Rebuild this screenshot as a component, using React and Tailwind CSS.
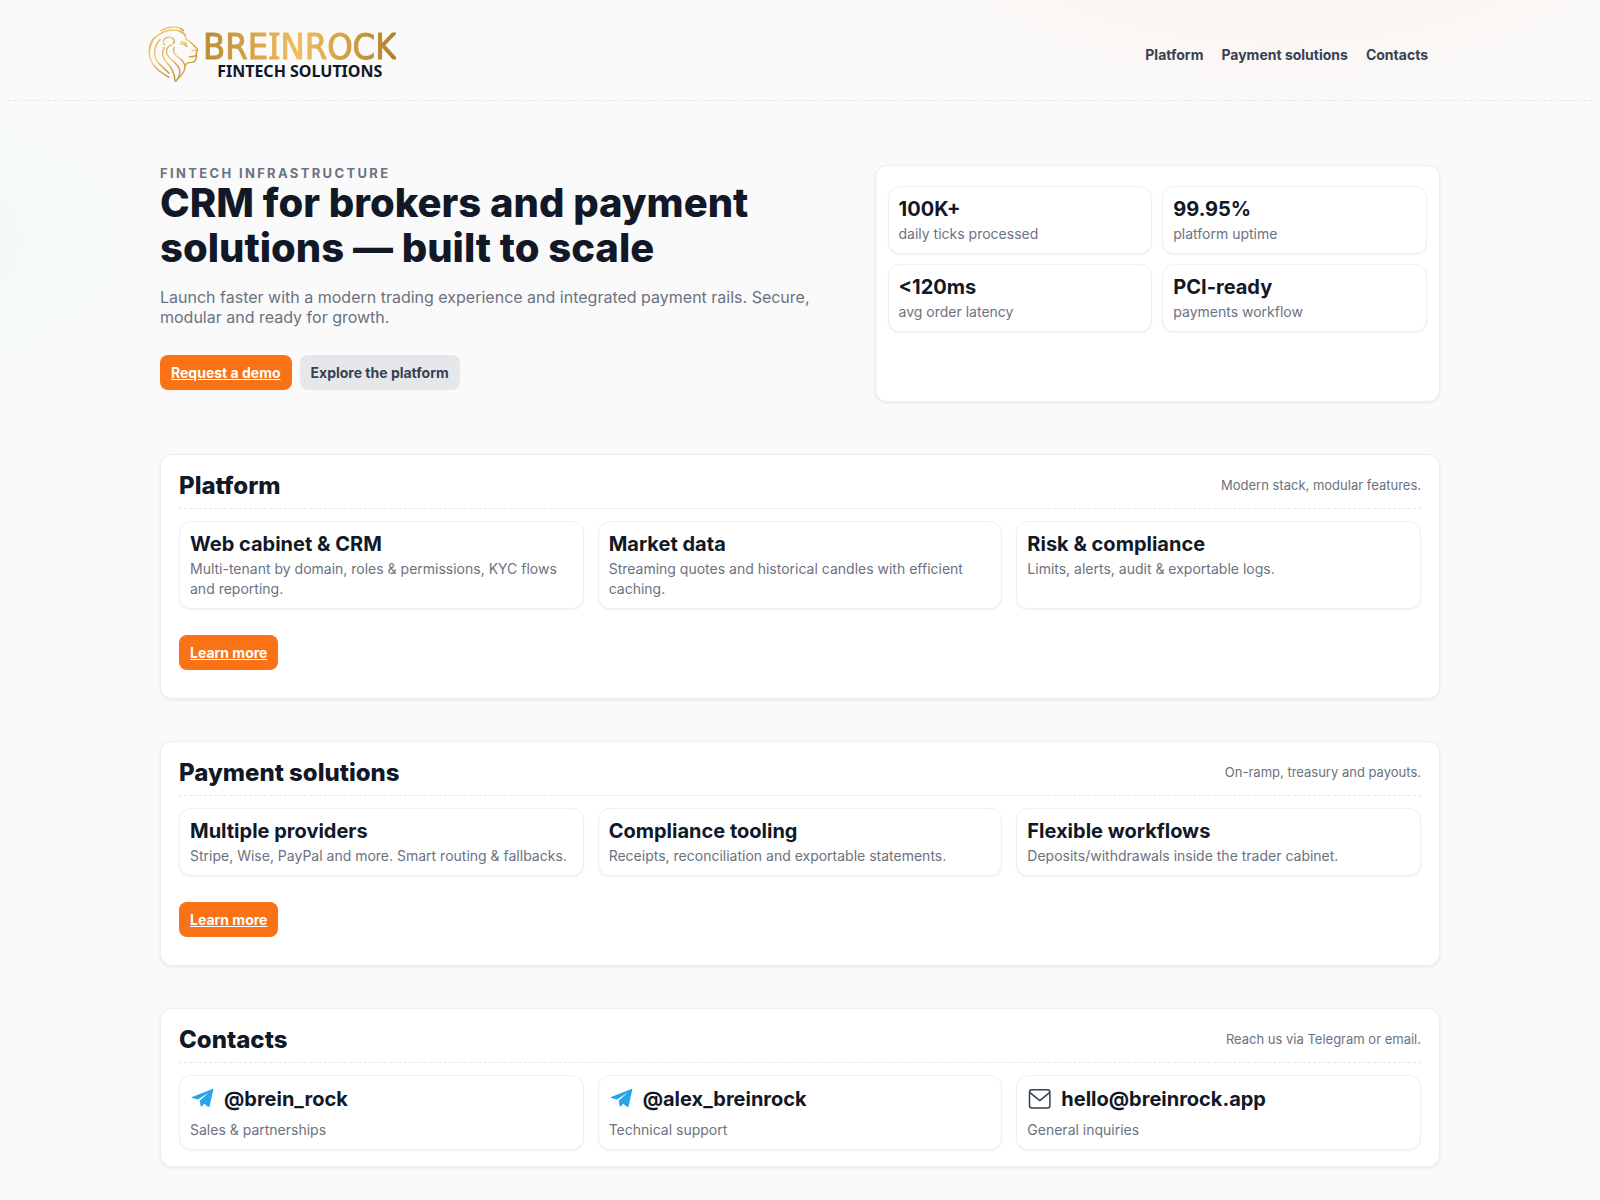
import React from "react";

const stats = [
  { value: "100K+", label: "daily ticks processed" },
  { value: "99.95%", label: "platform uptime" },
  { value: "<120ms", label: "avg order latency" },
  { value: "PCI-ready", label: "payments workflow" },
];

const platform = [
  {
    title: "Web cabinet & CRM",
    text: "Multi-tenant by domain, roles & permissions, KYC flows and reporting.",
  },
  {
    title: "Market data",
    text: "Streaming quotes and historical candles with efficient caching.",
  },
  {
    title: "Risk & compliance",
    text: "Limits, alerts, audit & exportable logs.",
  },
];

const payments = [
  {
    title: "Multiple providers",
    text: "Stripe, Wise, PayPal and more. Smart routing & fallbacks.",
  },
  {
    title: "Compliance tooling",
    text: "Receipts, reconciliation and exportable statements.",
  },
  {
    title: "Flexible workflows",
    text: "Deposits/withdrawals inside the trader cabinet.",
  },
];

const contacts = [
  { icon: "telegram", title: "@brein_rock", text: "Sales & partnerships" },
  { icon: "telegram", title: "@alex_breinrock", text: "Technical support" },
  { icon: "mail", title: "hello@breinrock.app", text: "General inquiries" },
];

const Lion = () => (
  <svg viewBox="0 0 174 192" className="h-16 w-[58px]" fill="none" aria-hidden="true">
    <defs>
      <linearGradient id="gold" x1="0" y1="0" x2="1" y2="1">
        <stop offset="0" stopColor="#e0ab48" />
        <stop offset="0.35" stopColor="#f3cd78" />
        <stop offset="0.6" stopColor="#d9a13c" />
        <stop offset="1" stopColor="#c4902f" />
      </linearGradient>
    </defs>
    <g stroke="url(#gold)" strokeWidth="4" strokeLinecap="round" strokeLinejoin="round">
      {/* mane, outside in */}
      <path d="M48 26C66 14 98 10 116 26" />
      <path d="M14 84C18 48 48 26 82 24c18 0 34 4 40 18" />
      <path d="M30 46C14 60 8 86 16 110c8 26 30 40 56 56" />
      <path d="M46 52C30 68 24 94 34 114c8 14 26 26 38 40" />
      <path d="M58 76C48 92 52 106 64 120c12 14 24 26 26 56" />
      <path d="M82 68c-16 4-22 18-14 32 10 16 32 24 36 44 2 12-2 24-12 34" />
      <path d="M88 76c-6 10 0 22 12 30 14 10 22 18 20 32-2 12-14 26-28 40" />
      {/* ear */}
      <path d="M58 68C50 54 60 44 76 46c10 1 14 8 10 18" />
      {/* face */}
      <path d="M104 28c12 4 18 12 20 24l12 8 18 18c5 3 5 8 1 12l-2 8c3 3 3 6 0 8 2 8-4 14-14 15-10 0-18 5-20 14" />
      <path d="M106 66c8-1 14 1 20 7M110 60l14 4" />
      <path d="M141 88c4-4 8-5 14-3M132 104c8 1 14 0 20-3" />
    </g>
  </svg>
);

const Logo = () => (
  <a href="#top" className="flex items-center" aria-label="Breinrock Fintech Solutions">
    <Lion />
    <span className="flex flex-col items-center pb-1">
      <span className="bg-linear-to-r from-[#b98a2e] via-[#f3bd5e] to-[#b07f27] bg-clip-text font-['DejaVu_Sans_Condensed','DejaVu_Sans',sans-serif] text-[36px] leading-9 text-transparent [-webkit-text-stroke:1px_transparent]">
        BRE<span className="font-['Noto_Sans']">I</span>NROCK
      </span>
      <span className="font-['Noto_Sans'] text-[16px] leading-3 font-bold text-[#111827]">
        FINTECH SOLUTIONS
      </span>
    </span>
  </a>
);

const TelegramIcon = () => (
  <svg viewBox="0 1 24 24" className="size-6 shrink-0" fill="#2aa4e8" aria-hidden="true">
    <path d="M1.500 10.200 22.400 1.900q1.100-.3.900.9l-3.700 16.400q-.4 1.200-1.600.5l-3.800-2.900-2.400 2.600q-1 .6-1.200-.6l-.8-5.200L19 5.600 8 12.400 2 10.900q-.8-.3-.5-.7Z" />
  </svg>
);

const MailIcon = () => (
  <svg
    viewBox="0 1 24 24"
    className="size-6 shrink-0"
    fill="none"
    stroke="#334155"
    strokeWidth="1.500"
    strokeLinejoin="round"
    aria-hidden="true"
  >
    <rect x="2.500" y="2.700" width="20.400" height="18.400" rx="2.500" />
    <path d="M3 5.700 12.800 13.600 22.500 5.700" />
  </svg>
);

const PrimaryLink = ({ href, children }) => (
  <a
    href={href}
    className="inline-block rounded-lg bg-[#f97316] px-[11px] py-2 text-sm leading-[19px] font-bold text-white underline"
  >
    {children}
  </a>
);

const Card = ({ title, text, icon }) => (
  <div className="rounded-xl border border-[#f0f0f1] bg-white px-[10px] pt-[10px] pb-[9px] shadow-[0_1px_2px_rgba(0,0,0,0.06)]">
    <h3
      className={
        icon
          ? "mb-[7px] flex items-center gap-[10px] text-xl leading-[27px] font-bold"
          : "mb-0.5 text-xl leading-[25px] font-bold"
      }
    >
      {icon === "telegram" && <TelegramIcon />}
      {icon === "mail" && <MailIcon />}
      {title}
    </h3>
    <p className="text-sm leading-5 text-[#6b7280]">{text}</p>
  </div>
);

const Section = ({ id, title, note, items, more }) => (
  <section
    id={id}
    className="mb-[42px] rounded-xl border border-[#eeeeef] bg-white px-[18px] pt-4 pb-4 shadow-[0_1px_3px_rgba(0,0,0,0.08)]"
  >
    <div className="mb-3 flex items-center justify-between border-b border-dashed border-[#e5e7eb] pb-2">
      <h2 className="text-2xl leading-[29px] font-extrabold">{title}</h2>
      <p className="pb-0.5 text-[13px] leading-4 text-[#6b7280]">{note}</p>
    </div>
    <div className="grid grid-cols-3 gap-[14px]">
      {items.map((item) => (
        <Card key={item.title} {...item} />
      ))}
    </div>
    {more && (
      <div className="mt-[26px] mb-3">
        <PrimaryLink href={more}>Learn more</PrimaryLink>
      </div>
    )}
  </section>
);

const App = () => {
  return (
    <div
      id="top"
      className="min-h-screen bg-[#fafafa] bg-[radial-gradient(800px_400px_at_80%_-10%,rgba(249,115,22,0.08),transparent_60%),radial-gradient(600px_300px_at_-10%_20%,rgba(34,211,238,0.06),transparent_60%)] px-2 font-['Inter',sans-serif] text-[#111827]"
    >
      <header className="border-b border-dashed border-[#e5e7eb]">
        <div className="mx-auto flex h-25 max-w-[1310px] items-center justify-between pt-2 pr-[27px]">
          <Logo />
          <nav className="flex gap-[18px] pt-0.5 text-sm font-bold text-[#374151]">
            <a href="#platform">Platform</a>
            <a href="#payments">Payment solutions</a>
            <a href="#contacts">Contacts</a>
          </nav>
        </div>
      </header>

      <main className="mx-auto max-w-[1280px] pt-16">
        <div className="mb-[52px] grid grid-cols-[1.2fr_1fr] gap-9">
          <div className="pb-3">
            <p className="-mb-0.5 text-[13px] leading-[17px] font-bold tracking-[0.18em] text-[#6b7280] uppercase">
              Fintech infrastructure
            </p>
            <h1 className="mb-[17px] text-[40px] leading-[45px] font-extrabold">
              CRM for brokers and payment solutions — built to scale
            </h1>
            <p className="mb-7 text-base leading-5 text-[#6b7280]">
              Launch faster with a modern trading experience and integrated
              payment rails. Secure, modular and ready for growth.
            </p>
            <div className="flex gap-2">
              <PrimaryLink href="#contacts">Request a demo</PrimaryLink>
              <a
                href="#platform"
                className="inline-block rounded-lg bg-[#e5e7eb] px-[11px] py-2 text-sm leading-[19px] font-bold text-[#374151]"
              >
                Explore the platform
              </a>
            </div>
          </div>
          <div className="grid grid-cols-2 content-start gap-[10px] rounded-xl border border-[#eeeeef] bg-white px-3 py-5 shadow-[0_1px_3px_rgba(0,0,0,0.08)]">
            {stats.map((stat) => (
              <Card key={stat.value} title={stat.value} text={stat.label} />
            ))}
          </div>
        </div>

        <Section
          id="platform"
          title="Platform"
          note="Modern stack, modular features."
          items={platform}
          more="#platform"
        />
        <Section
          id="payments"
          title="Payment solutions"
          note="On-ramp, treasury and payouts."
          items={payments}
          more="#payments"
        />
        <Section
          id="contacts"
          title="Contacts"
          note="Reach us via Telegram or email."
          items={contacts}
        />
      </main>
    </div>
  );
};

export default App;
